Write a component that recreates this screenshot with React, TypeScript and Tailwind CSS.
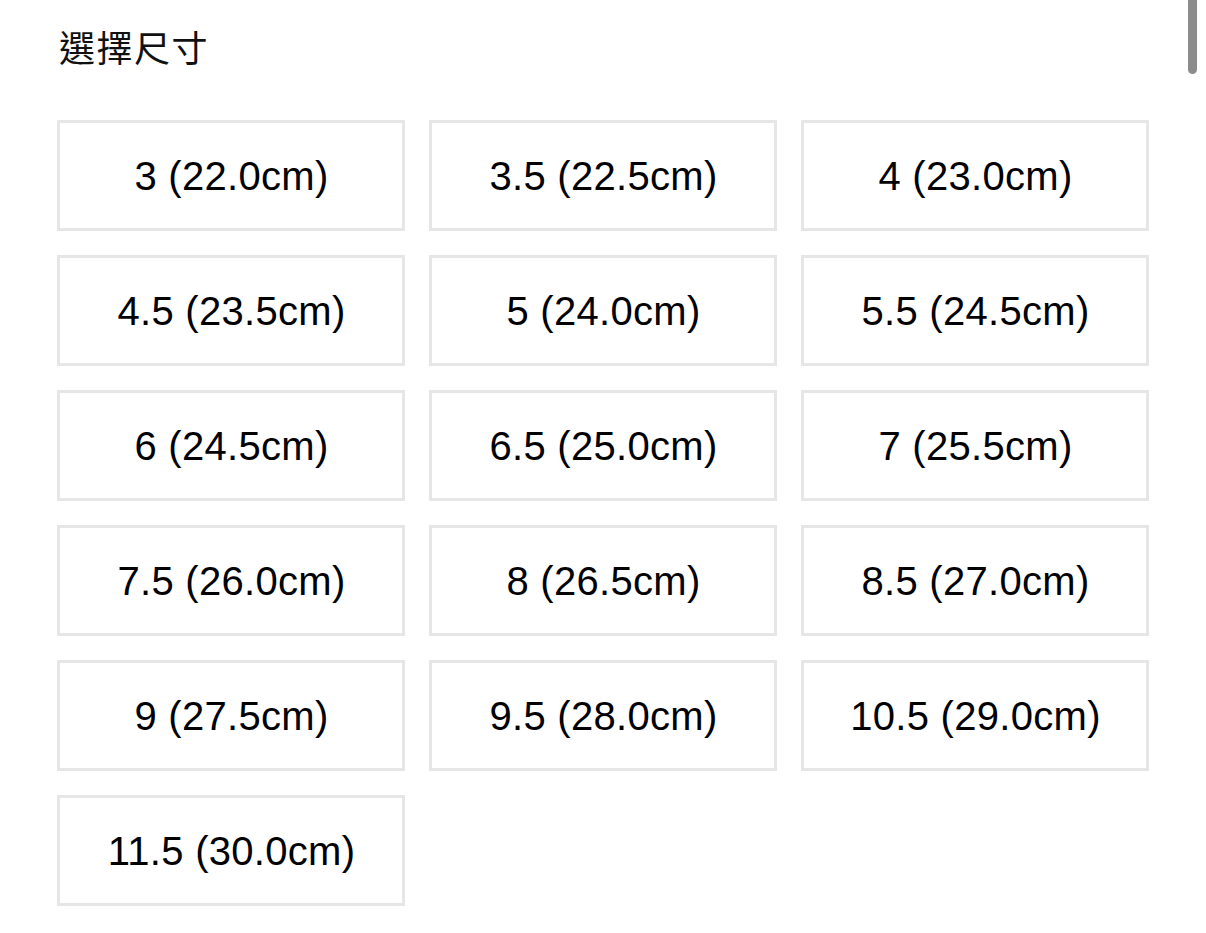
import React from 'react';

const sizes = [
    '3 (22.0cm)', '3.5 (22.5cm)', '4 (23.0cm)',
    '4.5 (23.5cm)', '5 (24.0cm)', '5.5 (24.5cm)',
    '6 (24.5cm)', '6.5 (25.0cm)', '7 (25.5cm)',
    '7.5 (26.0cm)', '8 (26.5cm)', '8.5 (27.0cm)',
    '9 (27.5cm)', '9.5 (28.0cm)', '10.5 (29.0cm)',
    '11.5 (30.0cm)',
];

export default function App() {
    return (
        <div className="relative min-h-[933px] bg-white px-[57px] pt-[28px] text-[#111]" style={{ fontFamily: '"Liberation Sans", "Noto Sans CJK TC", sans-serif' }}>
            {/* Title */}
            <h2 className="h-[36px] pl-[2px] text-[36px] leading-none font-normal tracking-[1.5px]" style={{ fontFamily: '"Noto Sans CJK TC", sans-serif' }}>
                選擇尺寸
            </h2>

            {/* Size grid */}
            <div className="mt-[56px] grid grid-cols-3 gap-6">
                {sizes.map((s) => (
                    <button
                        key={s}
                        className="flex h-[111px] items-center justify-center border-[3px] border-[#e6e6e6] bg-white pl-[1px] text-[40px] leading-none tracking-[0.3px] text-black"
                    >
                        {s}
                    </button>
                ))}
            </div>

            {/* Scroll indicator */}
            <div className="absolute top-[-6px] left-[1188px] h-[80px] w-[9px] rounded-full bg-[#8c8c8c]" />
        </div>
    );
}
